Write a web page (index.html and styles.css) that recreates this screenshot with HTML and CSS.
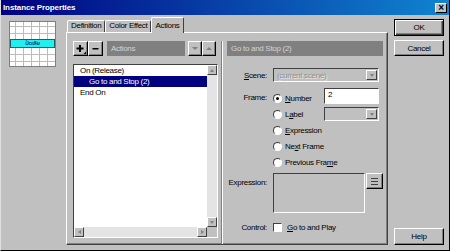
FILE: index.html
```html
<!DOCTYPE html>
<html lang="en">

<head>
    <meta charset="UTF-8">
    <title>Instance Properties</title>
    <link rel="stylesheet" href="styles.css">
</head>

<body>
    <div class="dialog">
        <div class="titlebar">
            <span class="title">Instance Properties</span>
            <span class="close">&times;</span>
        </div>

        <div class="content">
            <div class="preview">
                <div class="stage">
                    <div class="instance">ปัดเสีย</div>
                </div>
            </div>

            <div class="tabbox">
                <div class="tabs">
                    <div class="tab">Definition</div>
                    <div class="tab">Color Effect</div>
                    <div class="tab active">Actions</div>
                </div>

                <div class="panel">
                    <div class="actions-col">
                        <div class="toolbar">
                            <button class="tool">
                                <svg width="11" height="11" viewBox="0 0 11 11">
                                    <path d="M4 2h2v2.5h2.5v2H6V9H4V6.5H1.5v-2H4z" fill="#000"/>
                                    <path d="M11 8.5V11H8.5z" fill="#000"/>
                                </svg>
                            </button>
                            <button class="tool">
                                <svg width="9" height="9" viewBox="0 0 9 9">
                                    <rect x="1.5" y="4" width="6" height="1.5" fill="#000"/>
                                </svg>
                            </button>
                            <div class="bar bar-actions">Actions</div>
                            <button class="tool small"><span class="tri big down"></span></button>
                            <button class="tool small"><span class="tri big up"></span></button>
                        </div>

                        <div class="listbox">
                            <ul class="items">
                                <li>On (Release)</li>
                                <li class="indent selected">Go to and Stop (2)</li>
                                <li>End On</li>
                            </ul>
                            <div class="vscroll">
                                <span class="sbtn"><span class="tri up"></span></span>
                                <span class="sbtn"><span class="tri down"></span></span>
                            </div>
                            <div class="hscroll">
                                <span class="sbtn"><span class="tri left"></span></span>
                                <span class="sbtn"><span class="tri right"></span></span>
                            </div>
                            <div class="corner"></div>
                        </div>
                    </div>

                    <div class="params-col">
                        <div class="bar">Go to and Stop (2)</div>

                        <div class="row scene-row">
                            <span class="label"><u>S</u>cene:</span>
                            <div class="select wide disabled">
                                <span class="value">(current scene)</span>
                                <span class="sbtn drop"><span class="tri down"></span></span>
                            </div>
                        </div>

                        <div class="row frame-row">
                            <span class="label">Frame:</span>
                            <div class="options">
                                <div class="opt">
                                    <span class="radio checked"></span>
                                    <span class="opt-text"><u>N</u>umber</span>
                                    <div class="input number">2</div>
                                </div>
                                <div class="opt">
                                    <span class="radio"></span>
                                    <span class="opt-text">L<u>a</u>bel</span>
                                    <div class="select narrow disabled">
                                        <span class="value"></span>
                                        <span class="sbtn drop"><span class="tri down"></span></span>
                                    </div>
                                </div>
                                <div class="opt">
                                    <span class="radio"></span>
                                    <span class="opt-text"><u>E</u>xpression</span>
                                </div>
                                <div class="opt">
                                    <span class="radio"></span>
                                    <span class="opt-text">Ne<u>x</u>t Frame</span>
                                </div>
                                <div class="opt">
                                    <span class="radio"></span>
                                    <span class="opt-text">Previous Fra<u>m</u>e</span>
                                </div>
                            </div>
                        </div>

                        <div class="row expr-row">
                            <span class="label">Expression:</span>
                            <div class="textarea"></div>
                            <button class="tool expr-btn">
                                <svg width="9" height="7" viewBox="0 0 9 7">
                                    <rect x="1" y="0" width="7" height="1" fill="#404040"/>
                                    <rect x="1" y="3" width="7" height="1" fill="#404040"/>
                                    <rect x="1" y="6" width="7" height="1" fill="#404040"/>
                                </svg>
                            </button>
                        </div>

                        <div class="row control-row">
                            <span class="label">Control:</span>
                            <span class="checkbox"></span>
                            <span><u>G</u>o to and Play</span>
                        </div>
                    </div>
                </div>
            </div>

            <div class="buttons">
                <button class="btn default">OK</button>
                <button class="btn">Cancel</button>
                <button class="btn help">Help</button>
            </div>
        </div>
    </div>
</body>

</html>
```

FILE: styles.css
```css
* {
    box-sizing: border-box;
}

body {
    margin: 0;
    font-family: "Liberation Sans", Arial, sans-serif;
    font-size: 8px;
    letter-spacing: -0.3px;
    color: #000;
    background-color: #c0c0c0;
}

button {
    font: inherit;
    letter-spacing: inherit;
    color: inherit;
    padding: 0;
    margin: 0;
}

.dialog {
    width: 450px;
    height: 251px;
    background-color: #c0c0c0;
    border-left: 1px solid #dfdfdf;
    border-right: 1px solid #000;
    border-bottom: 1px solid #000;
    display: flex;
    flex-direction: column;
}

/* title bar */
.titlebar {
    height: 15px;
    display: flex;
    align-items: center;
    padding: 0 2px 0 2px;
    background: linear-gradient(90deg, #000080, #1084d0);
    color: #fff;
    font-weight: bold;
    letter-spacing: -0.1px;
}

.close {
    margin-left: auto;
    width: 12px;
    height: 10px;
    background-color: #c0c0c0;
    color: #000;
    border: 1px solid;
    border-color: #fff #000 #000 #fff;
    font-size: 10px;
    line-height: 7px;
    text-align: center;
}

.content {
    flex: 1;
    display: flex;
    padding: 2px 0 5px 0;
}

/* left preview */
.preview {
    width: 65px;
    padding: 4px 0 0 8px;
}

.stage {
    width: 47px;
    height: 46px;
    border: 1px solid #808080;
    background-color: #fff;
    background-image: linear-gradient(#bcbcbc 1px, transparent 1px),
        linear-gradient(90deg, #bcbcbc 1px, transparent 1px);
    background-size: 8px 7px;
    background-position: 5px 4px;
    padding-top: 17px;
}

.instance {
    height: 9px;
    background-color: #22f0f0;
    border: 1px solid #206060;
    color: #000060;
    font-family: "Noto Sans Thai", "Noto Sans", "DejaVu Sans", sans-serif;
    font-size: 6px;
    line-height: 7px;
    text-align: center;
    overflow: hidden;
}

/* tabs */
.tabbox {
    width: 322px;
    display: flex;
    flex-direction: column;
}

.tabs {
    height: 15px;
    display: flex;
    align-items: flex-end;
    padding-left: 1px;
}

.tab {
    height: 12px;
    padding: 0 3px;
    border: 1px solid;
    border-color: #fff #404040 transparent #fff;
    border-bottom: none;
    border-radius: 2px 2px 0 0;
    line-height: 10px;
}

.tab.active {
    height: 16px;
    margin-bottom: -1px;
    padding-top: 3px;
    position: relative;
    background-color: #c0c0c0;
}

.panel {
    height: 213px;
    display: flex;
    padding: 8px 4px 0 6px;
    border: 1px solid;
    border-color: #fff #404040 #404040 #fff;
    box-shadow: inset -1px -1px #808080;
}

/* actions list side */
.actions-col {
    width: 145px;
    display: flex;
    flex-direction: column;
}

.toolbar {
    height: 15px;
    display: flex;
    padding-right: 2px;
}

.tool {
    width: 15px;
    height: 15px;
    background-color: #c0c0c0;
    border: 1px solid;
    border-color: #fff #000 #000 #fff;
    box-shadow: inset -1px -1px #808080;
    display: flex;
    align-items: center;
    justify-content: center;
}

.tool.small {
    width: 14px;
}

.bar {
    height: 15px;
    line-height: 15px;
    background-color: #808080;
    color: #d4d4d4;
    padding-left: 4px;
}

.bar-actions {
    flex: 1;
    margin: 0 3px 0 4px;
}

.tri {
    width: 0;
    height: 0;
    border: 2px solid transparent;
}

.tri.big {
    border-width: 3px;
}

.tri.down {
    border-top: 3px solid #808080;
    border-bottom: none;
}

.tri.up {
    border-bottom: 3px solid #808080;
    border-top: none;
}

.tri.left {
    border-right: 3px solid #808080;
    border-left: none;
}

.tri.right {
    border-left: 3px solid #808080;
    border-right: none;
}

.listbox {
    margin-top: 8px;
    height: 174px;
    border: 1px solid;
    border-color: #404040 #fff #fff #404040;
    display: grid;
    grid-template-columns: 1fr 10px;
    grid-template-rows: 1fr 10px;
    background-color: #fff;
}

.items {
    list-style: none;
    margin: 0;
    padding: 0;
}

.items li {
    height: 11px;
    line-height: 11px;
    padding-left: 6px;
}

.items li.indent {
    padding-left: 15px;
}

.items li.selected {
    background-color: #000080;
    color: #fff;
}

.vscroll {
    background-color: #e4e4e4;
    display: flex;
    flex-direction: column;
    justify-content: space-between;
}

.hscroll {
    background-color: #e4e4e4;
    display: flex;
    justify-content: space-between;
}

.sbtn {
    width: 10px;
    height: 10px;
    background-color: #c0c0c0;
    border: 1px solid;
    border-color: #fff #404040 #404040 #fff;
    display: flex;
    align-items: center;
    justify-content: center;
}

.corner {
    background-color: #c0c0c0;
}

/* parameters side */
.params-col {
    flex: 1;
    margin-left: 3px;
    border-left: 1px solid #808080;
    box-shadow: inset 1px 0 #fff;
    padding-left: 5px;
}

.row {
    display: flex;
}

.label {
    width: 40px;
    margin-right: 6px;
    text-align: right;
}

.scene-row {
    margin-top: 12px;
    height: 14px;
    align-items: center;
}

.select {
    height: 14px;
    display: flex;
    align-items: center;
    border: 1px solid;
    border-color: #404040 #fff #fff #404040;
    background-color: #c0c0c0;
    padding: 1px;
}

.select.wide {
    width: 106px;
}

.select.narrow {
    width: 55px;
}

.select .value {
    flex: 1;
    padding-left: 2px;
    color: #909090;
    text-shadow: 1px 1px #e8e8e8;
}

.sbtn.drop {
    width: 11px;
    height: 10px;
}

.frame-row {
    margin-top: 8px;
}

.frame-row .label {
    line-height: 16px;
}

.opt {
    height: 16px;
    display: flex;
    align-items: center;
}

.opt-text {
    width: 39px;
    white-space: nowrap;
}

.radio {
    width: 9px;
    height: 9px;
    border-radius: 50%;
    background-color: #fff;
    border: 1px solid;
    border-color: #404040 #fff #fff #404040;
    margin-right: 3px;
    display: flex;
    align-items: center;
    justify-content: center;
}

.radio.checked::after {
    content: "";
    width: 3px;
    height: 3px;
    border-radius: 50%;
    background-color: #000;
}

.input {
    width: 55px;
    height: 16px;
    align-self: flex-start;
    margin-top: -2px;
    border: 1px solid;
    border-color: #404040 #fff #fff #404040;
    background-color: #fff;
    padding-left: 3px;
    line-height: 12px;
}

.expr-row {
    margin-top: 3px;
}

.expr-row .label {
    padding-top: 5px;
}

.textarea {
    width: 92px;
    height: 40px;
    border: 1px solid;
    border-color: #404040 #fff #fff #404040;
    background-color: #c0c0c0;
}

.expr-btn {
    width: 17px;
    height: 16px;
    margin-left: 1px;
}

.control-row {
    margin-top: 9px;
    height: 10px;
    align-items: center;
}

.checkbox {
    width: 9px;
    height: 9px;
    background-color: #fff;
    border: 1px solid;
    border-color: #404040 #fff #fff #404040;
    margin-right: 5px;
}

/* dialog buttons */
.buttons {
    width: 50px;
    margin-left: 6px;
    padding-top: 2px;
    display: flex;
    flex-direction: column;
}

.btn {
    height: 16px;
    background-color: #c0c0c0;
    border: 1px solid;
    border-color: #fff #000 #000 #fff;
    box-shadow: inset -1px -1px #808080;
    text-align: center;
}

.btn.default {
    height: 17px;
    border-color: #000;
    box-shadow: inset 1px 1px #fff, inset -1px -1px #404040, inset -2px -2px #808080;
}

.btn + .btn {
    margin-top: 4px;
}

.btn.help {
    margin-top: auto;
    height: 17px;
}
```
